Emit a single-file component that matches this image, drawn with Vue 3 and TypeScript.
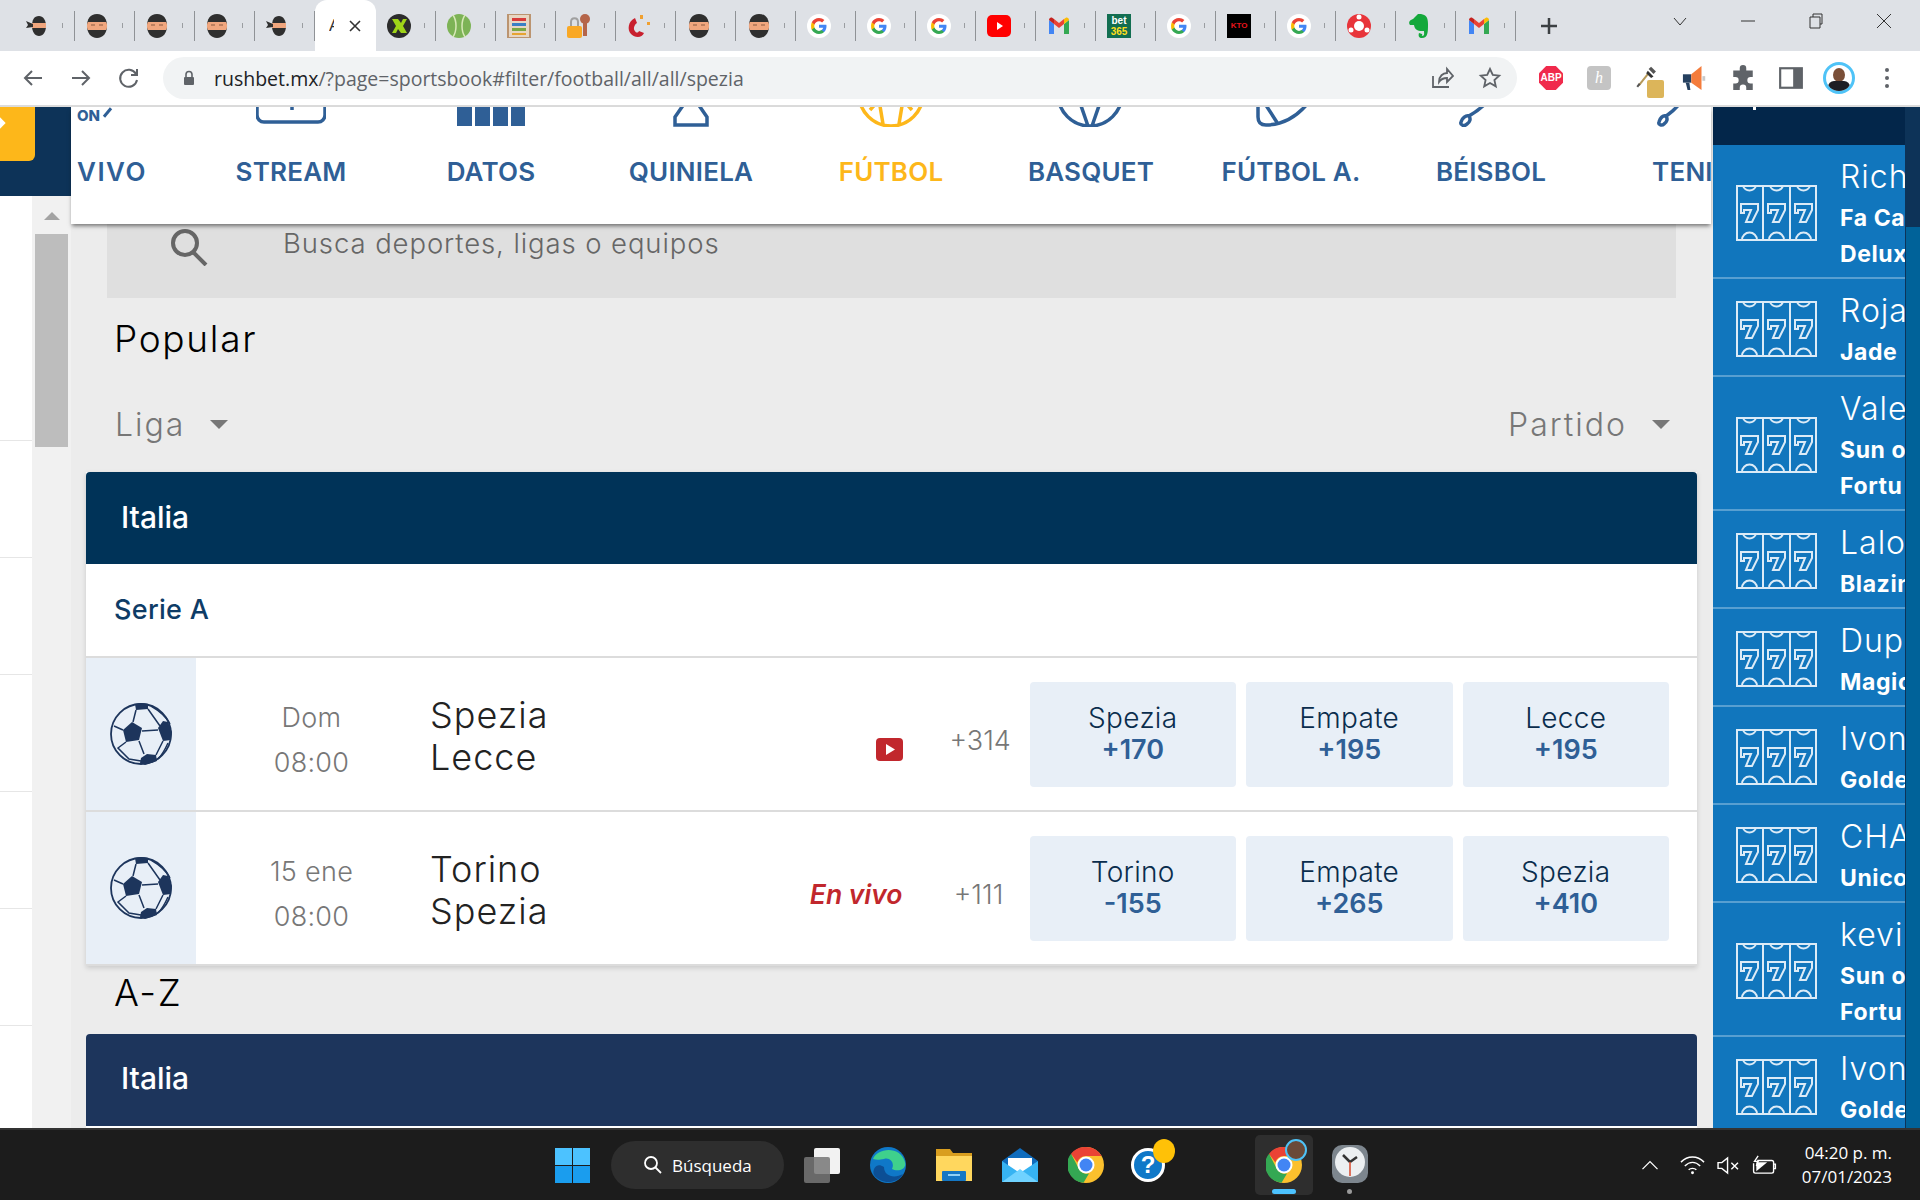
<template>
  <div class="screen">
    <!-- shared icon sprite -->
    <svg class="sprite" aria-hidden="true">
      <defs>
        <symbol id="ninja" viewBox="0 0 24 24">
          <path d="M12 0C5 0 2 5 2 12s4 12 10 12 10-5 10-12S19 0 12 0z" fill="#2f2f2f" />
          <path d="M3 8h18c1.500 2 1.500 6 0 8H3c-1.500-2-1.500-6 0-8z" fill="#f0a67e" />
          <path d="M6 11h4M14 11h4" stroke="#8a5a40" stroke-width="1" />
        </symbol>
        <symbol id="ninja-small" viewBox="0 0 24 24">
          <path d="M14 2C9 2 7 6 7 12s3 10 7 10 7-4 7-10-3-10-7-10z" fill="#2f2f2f" />
          <path d="M7 9h14v5H7z" fill="#f0a67e" />
          <path d="M8 10L1 7l2 4-2 3 7-1z" fill="#2f2f2f" />
        </symbol>
        <symbol id="google" viewBox="0 0 24 24">
          <circle cx="12" cy="12" r="12" fill="#fff" />
          <path d="M19.500 12.300c0-.6 0-1.100-.2-1.600H12v3h4.200c-.2 1-.8 1.800-1.700 2.400v2h2.600c1.500-1.400 2.400-3.400 2.400-5.800z" fill="#4285f4" />
          <path d="M12 20c2.200 0 4-.7 5.100-1.900l-2.600-2c-.7.500-1.500.8-2.500.8-2.100 0-3.900-1.400-4.500-3.300H4.800v2.100C6.100 18.300 8.900 20 12 20z" fill="#34a853" />
          <path d="M7.500 13.600c-.3-1-.3-2.200 0-3.200V8.300H4.800c-1 2.200-1 5.200 0 7.400z" fill="#fbbc05" />
          <path d="M12 7.200c1.200 0 2.200.4 3.100 1.200l2.300-2.300C16 4.800 14.200 4 12 4 8.900 4 6.100 5.700 4.800 8.300l2.700 2.100C8.100 8.600 9.900 7.200 12 7.200z" fill="#ea4335" />
        </symbol>
        <symbol id="gmail" viewBox="0 0 24 24">
          <path d="M2 6v14h5V10z" fill="#4285f4" />
          <path d="M22 6v14h-5V10z" fill="#34a853" />
          <path d="M7 10V5l5 4 5-4v5l-5 4z" fill="#ea4335" />
          <path d="M2 6c0-2 2-3 3.500-2L7 5v5z" fill="#c5221f" />
          <path d="M22 6c0-2-2-3-3.500-2L17 5v5z" fill="#fbbc05" />
        </symbol>
        <symbol id="youtube" viewBox="0 0 24 24">
          <rect x="0" y="1" width="24" height="22" rx="5" fill="#ff0000" />
          <path d="M10 8l6 4-6 4z" fill="#fff" />
        </symbol>
        <symbol id="xbet" viewBox="0 0 24 24">
          <circle cx="12" cy="12" r="12" fill="#2c2c2c" />
          <path d="M5 5h6l3 4 2-4h4l-4 7 4 7h-6l-3-4-2 4H5l4-7z" fill="#9fd418" />
        </symbol>
        <symbol id="tennis" viewBox="0 0 24 24">
          <ellipse cx="12" cy="12" rx="12" ry="12" fill="#7db356" />
          <path d="M6 1c4 6 4 16 0 22M18 1c-4 6-4 16 0 22" fill="none" stroke="#d8e8b8" stroke-width="1.500" />
        </symbol>
        <symbol id="abacus" viewBox="0 0 24 24">
          <rect x="1" y="0" width="22" height="24" fill="#e7d6c2" stroke="#bb9470" stroke-width="2" />
          <rect x="5" y="4" width="14" height="3" fill="#d83b3a" />
          <rect x="5" y="9" width="14" height="3" fill="#3a7fc4" />
          <rect x="5" y="14" width="14" height="3" fill="#7aa843" />
          <rect x="5" y="19" width="14" height="2" fill="#e6a330" />
        </symbol>
        <symbol id="lockkey" viewBox="0 0 24 24">
          <path d="M4 13V8c0-5 7-5 7 0v5" fill="none" stroke="#a0a0a0" stroke-width="2" />
          <rect x="0" y="12" width="15" height="12" rx="2" fill="#f9a825" />
          <circle cx="18" cy="5" r="5" fill="#b5654a" />
          <rect x="16" y="8" width="4" height="14" fill="#b5654a" />
        </symbol>
        <symbol id="magnet" viewBox="0 0 24 24">
          <path d="M8 4C1 7 0 16 4 20c4 4 11 4 13-1l-5-2c-1 2-3 2-4 0-2-2-1-6 2-8z" fill="#c8202f" />
          <rect x="13" y="1" width="3" height="4" fill="#f0a030" />
          <rect x="20" y="8" width="3" height="3" fill="#f0a030" />
        </symbol>
        <symbol id="evernote" viewBox="0 0 24 24">
          <path d="M6 5l5-5h3c5 1 7 3 7 10 0 8 0 14-6 14-3 0-4-2-3-5l3 1c1 1-1 2 0 2 3 0 2-3 2-5-5 0-9 0-10-6H3C1 8 3 6 6 5z" fill="#14a83b" />
        </symbol>
        <symbol id="redball" viewBox="0 0 24 24">
          <circle cx="12" cy="12" r="12" fill="#e8343a" />
          <circle cx="12" cy="12" r="5" fill="#fff" />
          <circle cx="12" cy="3" r="2.500" fill="#fff" />
          <circle cx="4" cy="16" r="2.500" fill="#fff" />
          <circle cx="20" cy="16" r="2.500" fill="#fff" />
        </symbol>
        <symbol id="ball" viewBox="-32 -32 64 64">
          <circle cx="0" cy="0" r="30" fill="none" stroke="#1d355c" stroke-width="1.800" />
          <g fill="#1d355c">
            <path d="M-9-12L1-6-2 6-15 8-18-4z" />
            <path d="M-6-30Q0-32 7-30L7-25-5-24z" />
            <path d="M17-6L22-13 27-12 31-2 30 6 22 7z" />
            <path d="M0 24L6 20 15 21 16 27 4 31-1 29z" />
          </g>
          <path d="M-5-24L-8-12M7-25L19-8M1-3L17-4M-2 7L3 20M22 7L15 21M-18-4L-27-8M-15 8L-23 14-12 25 0 27M10-28Q24-20 29-10M27 9Q22 20 17 25" fill="none" stroke="#1d355c" stroke-width="1.500" />
        </symbol>
        <symbol id="slots" viewBox="0 0 81 56">
          <g fill="none" stroke="#dcebf7" stroke-width="2">
            <path d="M1 1h79v54H1zM27 1v54M54 1v54" />
            <path d="M7 1a7 7 0 0 0 13 0M34 1a7 7 0 0 0 13 0M61 1a7 7 0 0 0 13 0" />
            <path d="M6 55a7.500 7.500 0 0 1 15 0M33 55a7.500 7.500 0 0 1 15 0M60 55a7.500 7.500 0 0 1 15 0" />
            <path d="M5 19h17v6l-6 12h-6l5-12h-7v3H5zM32 19h17v6l-6 12h-6l5-12h-7v3h-3zM59 19h17v6l-6 12h-6l5-12h-7v3h-3z" />
          </g>
        </symbol>
        <symbol id="chrome" viewBox="0 0 36 36">
          <circle cx="18" cy="18" r="18" fill="#fbc02d" />
          <path d="M18 0a18 18 0 0 1 15.600 9H18a9 9 0 0 0-8.600 6.500L3 6.800A18 18 0 0 1 18 0z" fill="#ea4335" />
          <path d="M3 6.800L11 22a9 9 0 0 0 10 4.500L15.500 35.800A18 18 0 0 1 3 6.800z" fill="#34a853" />
          <circle cx="18" cy="18" r="8.500" fill="#fff" />
          <circle cx="18" cy="18" r="6.500" fill="#4285f4" />
        </symbol>
      </defs>
    </svg>

    <!-- browser tabs -->
    <div class="tabstrip">
      <div class="tabs">
        <div v-for="(tab, i) in tabs" :key="i" class="tab" :class="{ 'tab--active': tab === 'active' }">
          <template v-if="tab === 'active'">
            <span class="tab-clip">A</span>
            <svg class="tab-close" viewBox="0 0 14 14"><path d="M2 2l10 10M12 2L2 12" /></svg>
          </template>
          <template v-else>
            <div v-if="tab === 'bet365'" class="fav fav-bet"><span>bet</span><span class="fav-bet-y">365</span></div>
            <div v-else-if="tab === 'kto'" class="fav fav-kto">KTO</div>
            <svg v-else class="fav"><use :href="`#${tab}`" /></svg>
            <span class="tab-sliver" />
          </template>
        </div>
      </div>
      <svg class="tab-plus" viewBox="0 0 20 20"><path d="M10 2v16M2 10h16" /></svg>
      <div class="win-controls">
        <svg viewBox="0 0 16 16"><path d="M2 5l6 7 6-7" /></svg>
        <svg viewBox="0 0 16 16"><path d="M1 8h14" /></svg>
        <svg viewBox="0 0 16 16"><path d="M2 4h10v11H2zM5 4V1h9v10h-2" /></svg>
        <svg viewBox="0 0 16 16"><path d="M1 1l14 14M15 1L1 15" /></svg>
      </div>
    </div>

    <!-- browser toolbar -->
    <div class="toolbar">
      <svg class="tool tool--back" viewBox="0 0 24 24"><path d="M21 12H4M11 5l-7 7 7 7" /></svg>
      <svg class="tool tool--next" viewBox="0 0 24 24"><path d="M3 12h17M13 5l7 7-7 7" /></svg>
      <svg class="tool tool--next" viewBox="0 0 24 24"><path d="M19 8a8.500 8.500 0 1 0 1 6M20 3v6h-6" /></svg>
      <div class="omnibox">
        <svg class="lock" viewBox="0 0 12 16"><path d="M3 7V4.500a3 3 0 0 1 6 0V7" fill="none" stroke="#5f6368" stroke-width="1.600" /><rect x="1" y="7" width="10" height="8" rx="1" fill="#5f6368" /></svg>
        <span class="url"><span class="url-host">rushbet.mx</span>/?page=sportsbook#filter/football/all/all/spezia</span>
        <svg class="omni-icon omni-icon--share" viewBox="0 0 24 24"><path d="M3 10v11h16M9 16c0-6 4-9 8-9V3l6 7-6 6v-4c-3 0-6 1-8 4z" /></svg>
        <svg class="omni-icon" viewBox="0 0 24 24"><path d="M12 3l2.800 6 6.400.7-4.800 4.300 1.400 6.400L12 17l-5.800 3.400 1.400-6.400-4.800-4.300 6.400-.7z" /></svg>
      </div>
      <div class="extensions">
        <div class="ext"><span class="ext-abp">ABP</span></div>
        <div class="ext"><span class="ext-h">h</span></div>
        <div class="ext ext--dropper">
          <svg viewBox="0 0 32 32"><path d="M6 25L18 10" stroke="#b69a5a" stroke-width="2.500" fill="none" /><path d="M4 27l3-4" stroke="#555" stroke-width="2.500" /><path d="M17 7l7 7-3 2-6-6z" fill="#333" /><path d="M21 2l6 6-3 3-6-6z" fill="#555" /></svg>
          <span class="ext-badge" />
        </div>
        <div class="ext">
          <svg viewBox="0 0 28 28"><path d="M1 10h9v9H1z" fill="#25405f" /><path d="M10 10l11-9v26l-11-8z" fill="#f47c3c" /><path d="M4 19h4l1 8H6z" fill="#25405f" /><rect x="22" y="12" width="3" height="5" fill="#c9c9c9" /></svg>
        </div>
        <div class="ext">
          <svg viewBox="0 0 24 24"><path d="M9 3a3 3 0 0 1 6 0v2h6v6h-2a3 3 0 0 0 0 6h2v6h-6v-2a3 3 0 0 0-6 0v2H3v-6h2a3 3 0 0 0 0-6H3V5h6z" fill="#5f6368" /></svg>
        </div>
        <div class="ext">
          <svg viewBox="0 0 24 24"><rect x="2" y="3" width="20" height="18" fill="none" stroke="#5f6368" stroke-width="2" /><rect x="14" y="3" width="8" height="18" fill="#5f6368" /></svg>
        </div>
        <div class="ext">
          <div class="avatar"><span class="avatar-face" /><span class="avatar-suit" /></div>
        </div>
        <div class="ext"><span class="dots"><i /><i /><i /></span></div>
      </div>
    </div>

    <!-- page -->
    <div class="page">
      <aside class="rail">
        <div class="rail-top"><div class="rail-orange"><span class="rail-mark" /></div></div>
        <div class="rail-body">
          <div class="rail-list">
            <div v-for="h in railRows" :key="h" class="rail-row" :class="`rail-row--${h}`" />
          </div>
          <div class="scrollbar">
            <span class="scroll-arrow" />
            <span class="scroll-thumb" />
          </div>
        </div>
      </aside>

      <main class="center">
        <nav class="sports">
          <div v-for="(item, i) in sports" :key="item.label" class="sport" :class="{ 'sport--first': i === 0, 'sport--active': item.active }">
            <div class="sport-icon">
              <span v-if="i === 0" class="sport-on">ON</span>
              <svg v-else viewBox="0 0 70 20" class="sport-svg">
                <path :d="item.d" :class="{ 'is-filled': item.filled }" />
              </svg>
            </div>
            <span class="sport-label">{{ item.label }}</span>
          </div>
        </nav>

        <div class="content">
          <div class="search">
            <svg class="search-icon" viewBox="0 0 38 38"><circle cx="15" cy="15" r="12" /><path d="M23 24l13 13" /></svg>
            <span>Busca deportes, ligas o equipos</span>
          </div>

          <h2 class="heading heading--popular">Popular</h2>

          <div class="filters">
            <span class="filter">Liga <i class="caret" /></span>
            <span class="filter">Partido <i class="caret" /></span>
          </div>

          <section class="card">
            <header class="card-head">Italia</header>
            <div class="league">Serie A</div>
            <div v-for="m in matches" :key="m.teams[0]" class="match">
              <div class="match-sport"><svg><use href="#ball" /></svg></div>
              <div class="match-time"><span>{{ m.day }}</span><span>08:00</span></div>
              <div class="match-teams"><span>{{ m.teams[0] }}</span><span>{{ m.teams[1] }}</span></div>
              <div class="match-signal">
                <span v-if="m.live" class="live">En vivo</span>
                <svg v-else class="yt" viewBox="0 0 27 23"><rect width="27" height="23" rx="4" fill="#c1272d" /><path d="M10 6l9 5.500-9 5.500z" fill="#fff" /></svg>
              </div>
              <div class="match-more">{{ m.more }}</div>
              <div class="odds">
                <button v-for="o in m.odds" :key="o.name" class="odd">
                  <span class="odd-name">{{ o.name }}</span>
                  <span class="odd-value">{{ o.value }}</span>
                </button>
              </div>
            </div>
          </section>

          <h2 class="heading heading--az">A-Z</h2>
          <header class="card-head card-head--az">Italia</header>
        </div>
      </main>

      <aside class="winners">
        <div class="winners-list">
          <div class="winners-top"><span class="winners-tick" /></div>
          <div v-for="(w, i) in winners" :key="i" class="winner">
            <svg class="winner-icon"><use href="#slots" /></svg>
            <div class="winner-text">
              <span class="winner-name">{{ w.name }}</span>
              <span v-for="g in w.game" :key="g" class="winner-game">{{ g }}</span>
            </div>
          </div>
        </div>
        <div class="winners-bar"><span class="winners-thumb" /></div>
      </aside>
    </div>

    <!-- windows taskbar -->
    <footer class="taskbar">
      <svg class="start" viewBox="0 0 35 35">
        <g fill="#4cc2ff"><rect width="17" height="17" /><rect x="18" width="17" height="17" /><rect y="18" width="17" height="17" fill="#1a9dee" /><rect x="18" y="18" width="17" height="17" fill="#1a9dee" /></g>
      </svg>
      <div class="task-search">
        <svg viewBox="0 0 20 20"><circle cx="8" cy="8" r="6" /><path d="M12.500 12.500L18 18" /></svg>
        <span>Búsqueda</span>
      </div>
      <div class="task-icons">
        <div class="task-slot">
          <svg viewBox="0 0 36 36"><rect x="10" y="1" width="26" height="26" rx="2" fill="#f2f2f2" /><rect y="10" width="26" height="26" rx="2" fill="#777" fill-opacity=".85" /></svg>
        </div>
        <div class="task-slot">
          <svg viewBox="0 0 36 36"><circle cx="18" cy="18" r="18" fill="#0f78c8" /><path d="M3 12C7 1 30-2 35 15c2 8-8 10-13 7 3-6-2-12-8-10-5 1-8 1-11 0z" fill="#3fd08c" /><path d="M14 20c0 9 10 12 19 7-5 10-22 11-29 1-2-3 1-14 10-8z" fill="#0c4f95" /></svg>
        </div>
        <div class="task-slot">
          <svg viewBox="0 0 36 36"><path d="M0 2h14l3 4h19v28H0z" fill="#d99e1f" /><path d="M0 9h36v25H0z" fill="#ffd75e" /><rect x="6" y="24" width="24" height="10" rx="1" fill="#1477c4" /><rect x="12" y="27" width="12" height="2" fill="#8fd0f5" /></svg>
        </div>
        <div class="task-slot">
          <svg viewBox="0 0 36 36"><path d="M18 1L0 14v21h36V14z" fill="#0f6cbd" /><path d="M6 11h24v9l-12 8-12-8z" fill="#fff" /><path d="M0 14l18 12 18-12v21H0z" fill="#36b3f2" /><path d="M0 35l18-13 18 13z" fill="#6fd2ff" /></svg>
        </div>
        <div class="task-slot"><svg><use href="#chrome" /></svg></div>
        <div class="task-slot task-slot--help">
          <div class="help">?</div>
          <span class="help-dot" />
        </div>
        <div class="task-slot" />
        <div class="task-slot task-slot--active">
          <svg><use href="#chrome" /></svg>
          <span class="task-avatar" />
          <span class="task-pill" />
        </div>
        <div class="task-slot task-slot--clock">
          <svg viewBox="0 0 36 40"><rect x="0" y="0" width="36" height="38" rx="10" fill="#7d868e" /><circle cx="18" cy="17" r="15" fill="#eceff1" /><path d="M18 17l-7-7M18 17l7-5" stroke="#333" stroke-width="2.500" fill="none" /><path d="M18 17v14" stroke="#d9482b" stroke-width="1.500" /></svg>
          <span class="task-dot" />
        </div>
      </div>
      <div class="tray">
        <svg class="tray-icon tray-chev" viewBox="0 0 20 12"><path d="M1 11l9-9 9 9" /></svg>
        <svg class="tray-icon tray-wifi" viewBox="0 0 26 20"><path d="M1 7c7-7 17-7 24 0M5 11c5-5 11-5 16 0M9 15c2-2 6-2 8 0" /><circle cx="13" cy="18" r="1.500" fill="#fff" stroke="none" /></svg>
        <svg class="tray-icon tray-vol" viewBox="0 0 24 20"><path d="M1 7h4l6-5v16l-6-5H1zM15 7l7 7M22 7l-7 7" /></svg>
        <svg class="tray-icon tray-bat" viewBox="0 0 26 22"><path d="M5 6h16a2 2 0 0 1 2 2v10a2 2 0 0 1-2 2H3a2 2 0 0 1-2-2V9M23 10h2v5h-2" /><path d="M4 8h12L4 18z" fill="#fff" stroke="none" /><path d="M6 1L2 7h4l-2 5" /></svg>
        <div class="clock"><span>04:20 p. m.</span><span>07/01/2023</span></div>
      </div>
    </footer>
  </div>
</template>

<script setup lang="ts">
interface Odd {
  name: string
  value: string
}

interface Match {
  day: string
  teams: [string, string]
  live: boolean
  more: string
  odds: Odd[]
}

// one entry per open tab, the name is the sprite symbol
const tabs: string[] = [
  'ninja-small', 'ninja', 'ninja', 'ninja', 'ninja-small', 'active', 'xbet', 'tennis', 'abacus', 'lockkey',
  'magnet', 'ninja', 'ninja', 'google', 'google', 'google', 'youtube', 'gmail', 'bet365', 'google',
  'kto', 'google', 'redball', 'evernote', 'gmail'
]

const railRows = ['a', 'b', 'c', 'd', 'e', 'f', 'g']

const sports = [
  { label: 'VIVO', d: '' },
  { label: 'STREAM', d: 'M1-10V8a7 7 0 0 0 7 7h54a7 7 0 0 0 7-7v-18M36-4v7' },
  { label: 'DATOS', d: 'M1-5h15v24H1zM19-5h15v24H19zM37-5h15v24H37zM55-5h14v24H55z', filled: true },
  { label: 'QUINIELA', d: 'M28-3L19 10v8h32v-8L42-3' },
  { label: 'FÚTBOL', d: 'M3-13a32 32 0 0 0 64 0M14 3l9-10h24l9 10M23-7l4 24M47-7l-4 24', active: true },
  { label: 'BASQUET', d: 'M2-13a32 32 0 0 0 64 0M22-10l10 29M46-10l-10 29' },
  { label: 'FÚTBOL A.', d: 'M2-6v16q0 8 8 8c20 0 36-12 48-30M6-8l16 25' },
  { label: 'BÉISBOL', d: 'M30-4C22 4 18 6 13 9M13 9c-3-1-7 2-8 6-1 3 3 5 6 2 3-2 4-5 2-8' },
  { label: 'TENIS', d: 'M24-4C18 4 14 6 10 9M10 9c-3-1-6 2-7 6-1 3 3 4 5 2 3-2 4-5 2-8' }
]

const matches: Match[] = [
  {
    day: 'Dom',
    teams: ['Spezia', 'Lecce'],
    live: false,
    more: '+314',
    odds: [
      { name: 'Spezia', value: '+170' },
      { name: 'Empate', value: '+195' },
      { name: 'Lecce', value: '+195' }
    ]
  },
  {
    day: '15 ene',
    teams: ['Torino', 'Spezia'],
    live: true,
    more: '+111',
    odds: [
      { name: 'Torino', value: '-155' },
      { name: 'Empate', value: '+265' },
      { name: 'Spezia', value: '+410' }
    ]
  }
]

const winners = [
  { name: 'Rich', game: ['Fa Ca', 'Delux'] },
  { name: 'Roja', game: ['Jade'] },
  { name: 'Vale', game: ['Sun o', 'Fortu'] },
  { name: 'Lalo', game: ['Blazin'] },
  { name: 'Dup', game: ['Magic'] },
  { name: 'Ivon', game: ['Golde'] },
  { name: 'CHA', game: ['Unico'] },
  { name: 'kevi', game: ['Sun o', 'Fortu'] },
  { name: 'Ivon', game: ['Golde'] }
]
</script>

<style>
html,
body {
  margin: 0;
  background: #1c1c1c;
}
</style>

<style scoped>
.screen {
  width: 1920px;
  height: 1200px;
  display: flex;
  flex-direction: column;
  overflow: hidden;
  font-family: Inter, "Liberation Sans", sans-serif;
}

.sprite {
  display: none;
}

/* tabs */
.tabstrip {
  height: 51px;
  flex: none;
  display: flex;
  align-items: flex-start;
  background: #dee1e6;
  padding-left: 15px;
}

.tabs {
  display: flex;
  width: 1501px;
}

.tab {
  width: 60px;
  height: 51px;
  box-sizing: border-box;
  flex: none;
  display: flex;
  align-items: center;
  padding-left: 10px;
  position: relative;
}

.tab::after {
  content: "";
  position: absolute;
  right: 0;
  top: 11px;
  height: 30px;
  width: 1px;
  background: #8f9296;
}

.tab--active {
  width: 61px;
  background: #fff;
  border-radius: 12px 12px 0 0;
  padding-left: 14px;
}

.tab--active::after {
  display: none;
}

.tab--active ~ .tab {
  padding-left: 11px;
}

.tab-clip {
  width: 5px;
  overflow: hidden;
  font-size: 17px;
  color: #333;
  font-family: "Liberation Sans", sans-serif;
}

.tab-close {
  width: 14px;
  height: 14px;
  margin-left: 14px;
  fill: none;
  stroke: #333;
  stroke-width: 1.600;
}

.fav {
  width: 24px;
  height: 24px;
  flex: none;
}

.fav-bet {
  background: #126e51;
  color: #fff;
  font: 700 10px/11px "Liberation Sans", sans-serif;
  display: flex;
  flex-direction: column;
  align-items: center;
  justify-content: center;
}

.fav-bet-y {
  color: #ffdf1b;
}

.fav-kto {
  background: #000;
  color: #e8141c;
  font: 700 8px/24px "Liberation Sans", sans-serif;
  text-align: center;
}

.tab-sliver {
  width: 1px;
  height: 5px;
  background: #9a9da1;
  margin-left: 13px;
}

.tab-plus {
  width: 20px;
  height: 20px;
  margin: 16px 0 0 23px;
  fill: none;
  stroke: #3c4043;
  stroke-width: 2.500;
}

.win-controls {
  margin-left: auto;
  width: 274px;
  height: 30px;
  display: flex;
  align-items: center;
  margin-top: 6px;
}

.win-controls svg {
  width: 16px;
  height: 16px;
  margin: 0 26px;
  fill: none;
  stroke: #333;
  stroke-width: 1;
}

/* toolbar */
.toolbar {
  height: 54px;
  flex: none;
  box-sizing: border-box;
  display: flex;
  align-items: center;
  background: #fff;
  padding-left: 21px;
}

.tool {
  width: 24px;
  height: 24px;
  flex: none;
  fill: none;
  stroke: #5f6368;
  stroke-width: 2;
}

.tool--next {
  margin-left: 24px;
}

.omnibox {
  width: 1354px;
  height: 42px;
  margin-left: 22px;
  border-radius: 21px;
  background: #f1f3f4;
  display: flex;
  align-items: center;
  flex: none;
}

.lock {
  width: 12px;
  height: 16px;
  margin-left: 20px;
  flex: none;
}

.url {
  margin-left: 19px;
  font-family: "Open Sans", sans-serif;
  font-size: 19.500px;
  color: #5f6368;
  white-space: nowrap;
}

.url-host {
  color: #202124;
}

.omni-icon {
  width: 24px;
  height: 24px;
  flex: none;
  margin-left: 24px;
  fill: none;
  stroke: #5f6368;
  stroke-width: 1.800;
}

.omni-icon--share {
  margin-left: auto;
}

.omni-icon:last-child {
  margin-right: 15px;
}

.extensions {
  display: flex;
  margin-left: 10px;
}

.ext {
  width: 48px;
  height: 40px;
  display: flex;
  align-items: center;
  justify-content: center;
  position: relative;
}

.ext svg {
  width: 26px;
  height: 26px;
}

.ext-abp {
  width: 24px;
  height: 24px;
  background: #f02a4c;
  clip-path: polygon(30% 0, 70% 0, 100% 30%, 100% 70%, 70% 100%, 30% 100%, 0 70%, 0 30%);
  color: #fff;
  font: 700 10px/24px "Liberation Sans", sans-serif;
  text-align: center;
}

.ext-h {
  width: 24px;
  height: 24px;
  border-radius: 4px;
  background: #c4c4c4;
  color: #fff;
  font: italic 16px/24px "Liberation Serif", serif;
  text-align: center;
}

.ext-badge {
  position: absolute;
  right: 7px;
  bottom: 0;
  width: 17px;
  height: 18px;
  border-radius: 2px;
  background: #dcb55a;
}

.avatar {
  width: 32px;
  height: 32px;
  box-sizing: border-box;
  border: 3px solid #4fc3f7;
  border-radius: 50%;
  overflow: hidden;
  position: relative;
  background: #fff;
}

.avatar-face {
  position: absolute;
  left: 7px;
  top: 3px;
  width: 12px;
  height: 14px;
  border-radius: 50%;
  background: #7a4f38;
}

.avatar-suit {
  position: absolute;
  left: 2px;
  top: 16px;
  width: 22px;
  height: 14px;
  border-radius: 6px 6px 0 0;
  background: #1e1e24;
}

.dots {
  display: flex;
  flex-direction: column;
  gap: 4px;
}

.dots i {
  width: 4px;
  height: 4px;
  border-radius: 50%;
  background: #5f6368;
}

/* page */
.page {
  flex: 1;
  min-height: 0;
  display: flex;
  border-top: 2px solid #dcdcdc;
}

.rail {
  width: 71px;
  flex: none;
  display: flex;
  flex-direction: column;
  background: #fff;
}

.rail-top {
  height: 89px;
  flex: none;
  background: #0d3358;
}

.rail-orange {
  width: 35px;
  height: 54px;
  background: #fdb71a;
  border-radius: 0 0 6px 0;
  overflow: hidden;
}

.rail-mark {
  display: block;
  width: 8px;
  height: 8px;
  margin: 12px 0 0 -4px;
  background: #fff;
  transform: rotate(45deg);
}

.rail-body {
  flex: 1;
  display: flex;
}

.rail-list {
  width: 32px;
  flex: none;
}

.rail-row {
  border-bottom: 1px solid #e6e6e6;
  height: 116px;
}

.rail-row--a {
  height: 244px;
}

.scrollbar {
  width: 39px;
  background: #f1f1f1;
  display: flex;
  flex-direction: column;
  align-items: center;
}

.scroll-arrow {
  margin-top: 16px;
  width: 0;
  height: 0;
  border: 8px solid transparent;
  border-top: 0;
  border-bottom: 8px solid #a3a3a3;
}

.scroll-thumb {
  margin-top: 14px;
  width: 33px;
  height: 213px;
  background: #bdbdbd;
}

.center {
  width: 1642px;
  flex: none;
  display: flex;
  flex-direction: column;
  background: #ececec;
  min-height: 0;
}

.sports {
  height: 117px;
  width: 1640px;
  box-sizing: border-box;
  flex: none;
  display: flex;
  background: #fff;
  overflow: hidden;
  position: relative;
  z-index: 2;
  box-shadow: 0 3px 4px -1px rgba(0, 0, 0, .5);
}

.sport {
  width: 200px;
  flex: none;
  display: flex;
  flex-direction: column;
  align-items: center;
  color: #2f5f96;
}

.sport--first {
  width: 120px;
  align-items: flex-start;
  padding-left: 6px;
  box-sizing: border-box;
}

.sport--first .sport-label {
  letter-spacing: 1.500px;
}

.sport--active {
  color: #fdb71a;
}

.sport-icon {
  height: 20px;
  width: 70px;
  flex: none;
}

.sport-on {
  display: block;
  font-size: 15px;
  font-weight: 800;
  line-height: 18px;
  color: #2f5f96;
}

.sport-on::after {
  content: "";
  display: inline-block;
  width: 3px;
  height: 11px;
  margin-left: 6px;
  background: #2f5f96;
  transform: translateY(-3px) rotate(40deg);
}

.sport-svg {
  width: 70px;
  height: 20px;
  display: block;
  overflow: hidden;
}

.sport-svg path {
  fill: none;
  stroke: currentColor;
  stroke-width: 3.500;
}

.sport-svg path.is-filled {
  fill: currentColor;
  stroke: none;
}

.sport-label {
  margin-top: 28px;
  font-size: 26px;
  line-height: 34px;
  font-weight: 600;
  white-space: nowrap;
  letter-spacing: .2px;
}

.content {
  flex: 1;
  min-height: 0;
  padding: 0 16px 0 15px;
  overflow: hidden;
}

.search {
  height: 74px;
  margin: 0 21px;
  background: #dfdfdf;
  color: #666;
  font-size: 27.500px;
  font-weight: 300;
  letter-spacing: .9px;
  display: flex;
  align-items: flex-start;
  line-height: 38px;
}

.search-icon {
  width: 38px;
  height: 38px;
  margin: 4px 75px 0 63px;
  fill: none;
  stroke: #666;
  stroke-width: 4;
}

.heading {
  margin: 0;
  padding-left: 28px;
  font-size: 37px;
  font-weight: 300;
  letter-spacing: 1.700px;
  color: #000;
  line-height: 44px;
}

.heading--popular {
  padding-top: 19px;
}

.heading--az {
  height: 68px;
  padding-top: 5px;
  box-sizing: border-box;
}

.filters {
  height: 111px;
  box-sizing: border-box;
  padding: 16px 27px 0 29px;
  display: flex;
  justify-content: space-between;
  color: #777;
  font-size: 32px;
  font-weight: 300;
  letter-spacing: 2px;
  line-height: 44px;
}

.filter {
  display: flex;
  align-items: center;
}

.caret {
  width: 0;
  height: 0;
  margin-left: 25px;
  border: 9px solid transparent;
  border-bottom: 0;
  border-top: 9px solid #777;
}

.card {
  background: #fff;
  box-shadow: 0 2px 5px rgba(0, 0, 0, .15);
}

.card-head {
  height: 92px;
  padding-left: 35px;
  background: #003358;
  color: #fff;
  border-radius: 4px 4px 0 0;
  font-size: 30px;
  font-weight: 500;
  line-height: 91px;
}

.card-head--az {
  background: #1d355c;
  border-bottom: 2px solid #fff;
  box-sizing: content-box;
  line-height: 88px;
}

.league {
  height: 92px;
  padding-left: 28px;
  border-bottom: 2px solid #dcdcdc;
  color: #0e3c66;
  font-size: 27px;
  font-weight: 500;
  letter-spacing: .3px;
  line-height: 92px;
}

.match {
  height: 152px;
  display: grid;
  grid-template-columns: 110px 231px 1fr auto auto auto;
  align-items: center;
  padding-right: 28px;
  border-bottom: 2px solid #dcdcdc;
}

.match-sport {
  height: 100%;
  background: #e8eff7;
  display: flex;
  align-items: center;
  justify-content: center;
}

.match-sport svg {
  width: 64px;
  height: 64px;
}

.match-time {
  display: flex;
  flex-direction: column;
  align-items: center;
  gap: 15px;
  padding-top: 13px;
  color: #777;
  font-size: 27px;
  font-weight: 300;
  letter-spacing: .3px;
  line-height: 30px;
}

.match-teams {
  display: flex;
  flex-direction: column;
  padding: 4px 0 0 3px;
  color: #222;
  font-size: 36px;
  font-weight: 300;
  line-height: 42px;
  letter-spacing: 1px;
}

.match-signal {
  display: flex;
  justify-content: flex-end;
}

.yt {
  width: 27px;
  height: 23px;
  margin-top: 31px;
}

.live {
  color: #c1272d;
  font-size: 26.500px;
  font-style: italic;
  font-weight: 600;
  line-height: 34px;
  margin-top: 12px;
}

.match-more {
  margin: 0 22px 0 47px;
  padding-top: 12px;
  text-align: center;
  color: #777;
  font-size: 27px;
  font-weight: 300;
  width: 58px;
}

.odds {
  display: flex;
  gap: 10px;
}

.odd {
  width: 206.500px;
  height: 105px;
  padding: 0;
  border: 0;
  border-radius: 4px;
  background: #e8eff7;
  display: flex;
  flex-direction: column;
  align-items: center;
  justify-content: center;
  font-family: inherit;
}

.odd-name {
  color: #0a2d4d;
  font-size: 28px;
  font-weight: 300;
  letter-spacing: .3px;
  line-height: 32px;
}

.odd-value {
  color: #2f5f96;
  font-size: 27px;
  font-weight: 600;
  line-height: 32px;
}

/* winners */
.winners {
  flex: 1;
  display: flex;
  min-width: 0;
}

.winners-list {
  width: 192px;
  flex: none;
  background: #1176bd;
  color: #fff;
  overflow: hidden;
}

.winners-top {
  height: 38px;
  background: #03264a;
  padding-left: 40px;
}

.winners-tick {
  display: block;
  width: 3px;
  height: 3px;
  background: #fff;
}

.winner {
  display: flex;
  align-items: center;
  padding: 9px 0 5px 23px;
  border-bottom: 2px solid rgba(255, 255, 255, .3);
  white-space: nowrap;
}

.winner-icon {
  width: 81px;
  height: 56px;
  flex: none;
}

.winner-text {
  display: flex;
  flex-direction: column;
  margin-left: 23px;
  width: 65px;
  overflow: hidden;
}

.winner-name {
  font-size: 32px;
  font-weight: 300;
  letter-spacing: 1px;
  line-height: 46px;
}

.winner-game {
  font-size: 23px;
  font-weight: 700;
  letter-spacing: .6px;
  line-height: 36px;
}

.winners-bar {
  flex: 1;
  background: #006299;
  border-left: 1px solid #0d3358;
}

.winners-thumb {
  display: block;
  height: 120px;
  background: #0d3358;
}

/* taskbar */
.taskbar {
  height: 72px;
  flex: none;
  box-sizing: border-box;
  display: flex;
  align-items: center;
  background: #1c1c1c;
  border-top: 2px solid #333;
  padding-left: 555px;
  color: #fff;
}

.start {
  width: 35px;
  height: 35px;
  flex: none;
}

.task-search {
  width: 173px;
  height: 48px;
  margin-left: 21px;
  flex: none;
  box-sizing: border-box;
  padding-left: 32px;
  display: flex;
  align-items: center;
  gap: 9px;
  border-radius: 24px;
  background: #2e2e2e;
  font-family: "Open Sans", sans-serif;
  font-size: 17px;
}

.task-search svg {
  width: 20px;
  height: 20px;
  fill: none;
  stroke: #fff;
  stroke-width: 1.800;
}

.task-icons {
  display: flex;
  margin-left: 5px;
}

.task-slot {
  width: 66px;
  height: 60px;
  flex: none;
  display: flex;
  align-items: center;
  justify-content: center;
  position: relative;
}

.task-slot svg {
  width: 36px;
  height: 36px;
}

.task-slot--active {
  background: #2e2e2e;
  border-radius: 5px;
  width: 58px;
  margin: 0 4px;
}

.task-avatar {
  position: absolute;
  right: 6px;
  top: 4px;
  width: 22px;
  height: 22px;
  box-sizing: border-box;
  border-radius: 50%;
  border: 2px solid #4fc3f7;
  background: #6a4a38;
}

.task-pill {
  position: absolute;
  bottom: 1px;
  left: 17px;
  width: 24px;
  height: 5px;
  border-radius: 3px;
  background: #4cc2ff;
}

.task-slot--clock svg {
  height: 40px;
}

.task-dot {
  position: absolute;
  bottom: 1px;
  left: 30px;
  width: 5px;
  height: 5px;
  border-radius: 50%;
  background: #9a9a9a;
}

.help {
  width: 34px;
  height: 34px;
  box-sizing: border-box;
  border: 3px solid #fff;
  border-radius: 50%;
  background: #0f78c8;
  color: #fff;
  font: 700 24px/28px "Liberation Sans", sans-serif;
  text-align: center;
  margin-right: 8px;
}

.help-dot {
  position: absolute;
  right: 10px;
  top: 4px;
  width: 22px;
  height: 24px;
  border-radius: 50%;
  background: #ffc107;
}

.tray {
  margin-left: auto;
  display: flex;
  align-items: center;
  padding-right: 28px;
}

.tray-icon {
  fill: none;
  stroke: #fff;
  stroke-width: 1.500;
  flex: none;
}

.tray-chev {
  width: 18px;
  height: 10px;
}

.tray-wifi {
  width: 25px;
  height: 20px;
  margin-left: 21px;
}

.tray-vol {
  width: 23px;
  height: 19px;
  margin-left: 12px;
}

.tray-bat {
  width: 25px;
  height: 20px;
  margin-left: 12px;
}

.clock {
  margin-left: 25px;
  display: flex;
  flex-direction: column;
  align-items: flex-end;
  font-family: "Open Sans", sans-serif;
  font-size: 17px;
  line-height: 24px;
  white-space: nowrap;
}
</style>
